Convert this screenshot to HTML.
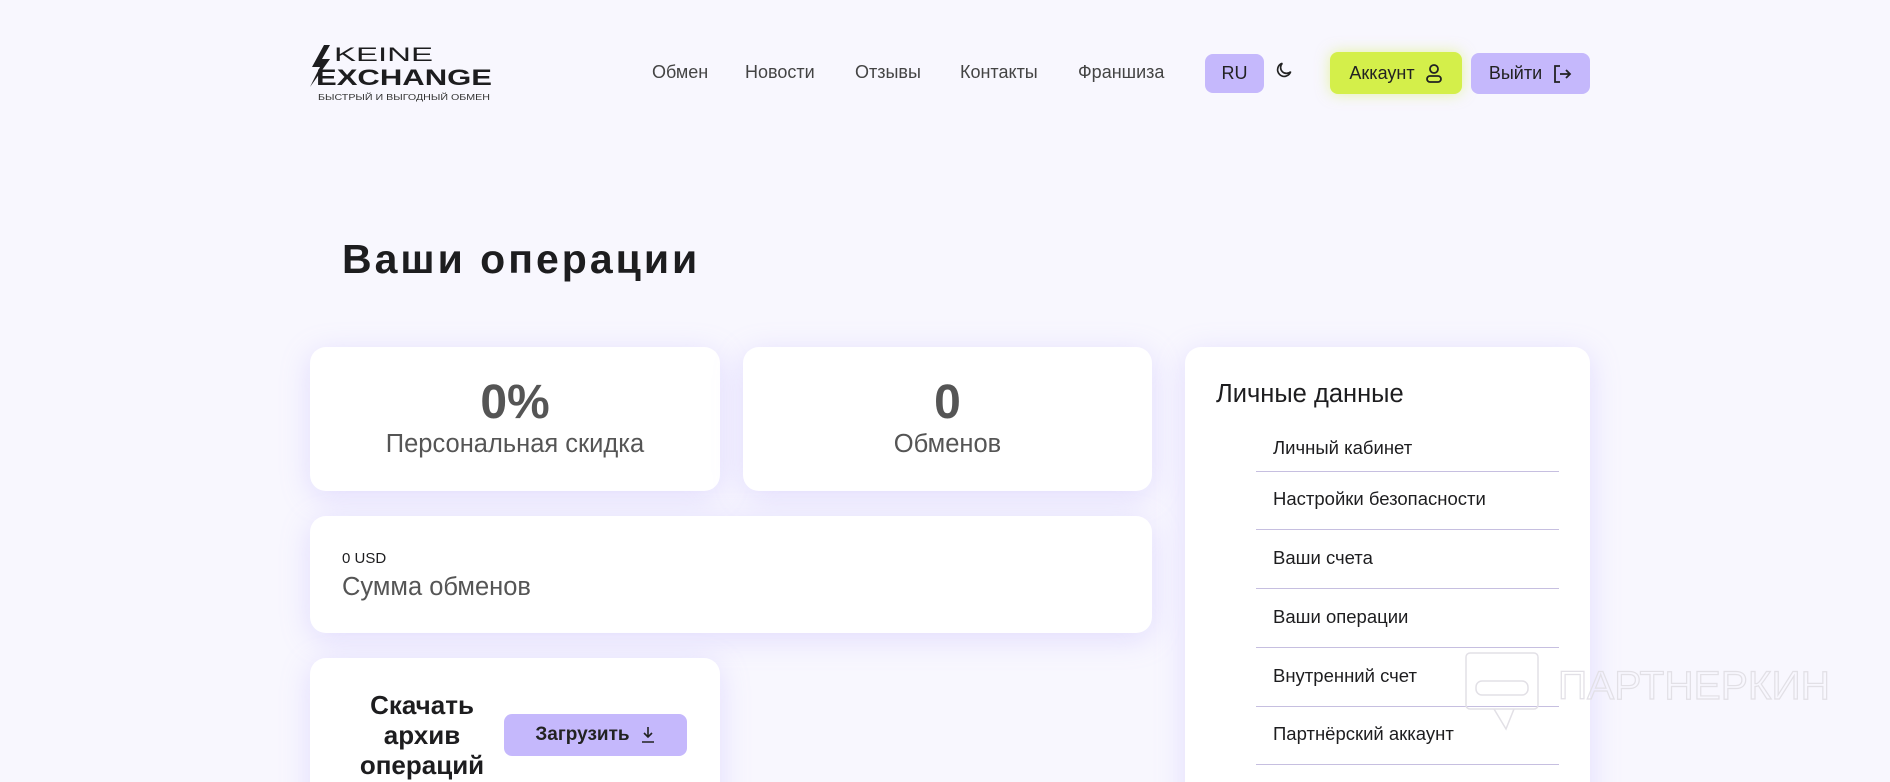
<!DOCTYPE html>
<html><head><meta charset="utf-8"><style>
*{margin:0;padding:0;box-sizing:border-box}
html,body{width:1890px;height:782px;overflow:hidden}
body{background:#f8f7fe;font-family:"Liberation Sans",sans-serif;color:#1d1d1f;position:relative}
.a{position:absolute}
.nav{font-size:18px;color:#444;top:62px}
.card{position:absolute;background:#fff;border-radius:16px;box-shadow:0 6px 30px rgba(170,150,250,.28)}
.btn{position:absolute;border-radius:8px;display:flex;align-items:center;justify-content:center;font-size:18px;color:#222;gap:10px}
.big{font-size:48px;font-weight:bold;color:#555;text-align:center;width:100%;position:absolute}
.lab{font-size:25.5px;color:#555;text-align:center;width:100%;position:absolute}
.li{position:absolute;left:1256px;width:303px;border-bottom:1px solid #c6bfe0;font-size:18.5px;padding-left:17px}
</style></head><body>
<svg class="a" style="left:310px;top:45px" width="185" height="60" viewBox="0 0 185 60">
<path d="M14 0 L2 22 L10 22 L0 42 L20 14 L12 14 L20 0Z" fill="#1d1d1f"/>
<text x="24" y="16" font-family="Liberation Sans" font-size="19" textLength="99" lengthAdjust="spacingAndGlyphs" fill="#1d1d1f">KEINE</text>
<text x="6" y="40" font-family="Liberation Sans" font-size="22" font-weight="bold" textLength="176" lengthAdjust="spacingAndGlyphs" fill="#1d1d1f">EXCHANGE</text>
<text x="8" y="55" font-family="Liberation Sans" font-size="8" textLength="172" lengthAdjust="spacingAndGlyphs" fill="#333">БЫСТРЫЙ И ВЫГОДНЫЙ ОБМЕН</text>
</svg>
<div class="a nav" style="left:652px">Обмен</div>
<div class="a nav" style="left:745px">Новости</div>
<div class="a nav" style="left:855px">Отзывы</div>
<div class="a nav" style="left:960px">Контакты</div>
<div class="a nav" style="left:1078px">Франшиза</div>
<div class="btn" style="left:1205px;top:54px;width:59px;height:39px;background:#c5b8fc">RU</div>
<svg class="a" style="left:1274px;top:60px" width="20" height="20" viewBox="0 0 24 24" fill="none" stroke="#222" stroke-width="2"><path d="M20 14A8 8 0 1 1 10 4a6 6 0 0 0 10 10z"/></svg>
<div class="btn" style="left:1330px;top:52px;width:132px;height:42px;background:#d4ef4a;box-shadow:0 0 14px rgba(212,239,74,.5)">Аккаунт
<svg width="18" height="20" viewBox="0 0 18 20" fill="none" stroke="#222" stroke-width="1.8"><circle cx="9" cy="6" r="4"/><rect x="2" y="13" width="14" height="6" rx="3"/></svg></div>
<div class="btn" style="left:1471px;top:53px;width:119px;height:41px;background:#c5b8fc">Выйти
<svg width="20" height="20" viewBox="0 0 20 20" fill="none" stroke="#222" stroke-width="1.8"><path d="M8 2H3v16h5M8 10h10M14 6l4 4-4 4"/></svg></div>
<div class="a" style="left:342px;top:236px;font-size:41px;letter-spacing:3px;font-weight:bold;color:#1d1d1f">Ваши операции</div>
<div class="card" style="left:310px;top:347px;width:410px;height:144px"><div class="big" style="top:28px">0%</div><div class="lab" style="top:83px">Персональная скидка</div></div>
<div class="card" style="left:743px;top:347px;width:409px;height:144px"><div class="big" style="top:28px">0</div><div class="lab" style="top:83px">Обменов</div></div>
<div class="card" style="left:310px;top:516px;width:842px;height:117px"><div class="a" style="left:32px;top:34px;font-size:15px">0 USD</div><div class="a" style="left:32px;top:57px;font-size:25.5px;color:#555">Сумма обменов</div></div>
<div class="card" style="left:310px;top:658px;width:410px;height:200px">
<div class="a" style="left:30px;top:32px;width:164px;text-align:center;font-size:26px;font-weight:bold;line-height:30px">Скачать<br>архив<br>операций</div>
<div class="btn" style="left:194px;top:56px;width:183px;height:42px;background:#c5b8fc;font-weight:bold;font-size:19px">Загрузить
<svg width="16" height="18" viewBox="0 0 16 18" fill="none" stroke="#222" stroke-width="1.6"><path d="M8 1v10M4 7l4 4 4-4M2 16h12"/></svg></div></div>
<div class="card" style="left:1185px;top:347px;width:405px;height:500px"></div>
<div class="a" style="left:1216px;top:380px;font-size:25.5px">Личные данные</div>
<div class="li" style="top:437px;height:35px">Личный кабинет</div>
<div class="li" style="top:488px;height:42px">Настройки безопасности</div>
<div class="li" style="top:547px;height:42px">Ваши счета</div>
<div class="li" style="top:606px;height:42px">Ваши операции</div>
<div class="li" style="top:665px;height:42px">Внутренний счет</div>
<div class="li" style="top:723px;height:42px">Партнёрский аккаунт</div>
<svg class="a" style="left:1464px;top:651px" width="380" height="80" viewBox="0 0 380 80" fill="none" stroke="#e2e0e6" stroke-width="1.5">
<rect x="2" y="2" width="72" height="56" rx="4"/><path d="M30 58l12 20 8-20"/><rect x="12" y="30" width="52" height="14" rx="6"/>
<text x="94" y="48" font-family="Liberation Sans" font-size="40" textLength="272" lengthAdjust="spacingAndGlyphs" fill="none" stroke="#e2e0e6" stroke-width="1.2">ПАРТНЕРКИН</text></svg>
</body></html>
